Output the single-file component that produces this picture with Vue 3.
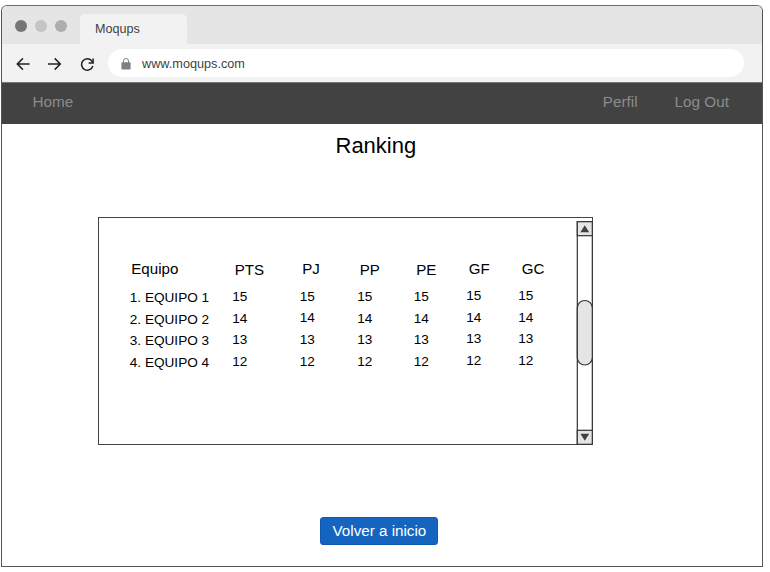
<script setup>
const columns = [
  { key: 'equipo', title: 'Equipo', values: ['1. EQUIPO 1', '2. EQUIPO 2', '3. EQUIPO 3', '4. EQUIPO 4'] },
  { key: 'pts', title: 'PTS', values: [15, 14, 13, 12] },
  { key: 'pj', title: 'PJ', values: [15, 14, 13, 12] },
  { key: 'pp', title: 'PP', values: [15, 14, 13, 12] },
  { key: 'pe', title: 'PE', values: [15, 14, 13, 12] },
  { key: 'gf', title: 'GF', values: [15, 14, 13, 12] },
  { key: 'gc', title: 'GC', values: [15, 14, 13, 12] }
]
</script>

<template>
  <div class="page">
    <div class="window">
      <header class="tabs">
        <div class="dots">
          <span class="dot dark"></span>
          <span class="dot light"></span>
          <span class="dot mid"></span>
        </div>
        <div class="tab">Moqups</div>
      </header>
      <div class="toolbar">
        <svg class="arrow" viewBox="0 0 14 14"><path d="M13.6 7H1.6M6.9 1.4L1.3 7l5.6 5.6" /></svg>
        <svg class="arrow" viewBox="0 0 14 14"><path d="M0 7h12.1M6.7 1.4L12.3 7l-5.6 5.6" /></svg>
        <svg class="arrow" viewBox="0 0 14 14">
          <path d="M12.8 9A5.7 5.7 0 1 1 11.6 3.7L13 5.4" />
          <path d="M13.1 1.6v4.3H8.6" />
        </svg>
        <div class="address">
          <svg class="lock" viewBox="0 0 10 12">
            <path class="shackle" d="M2.5 5V3a2.5 2.5 0 0 1 5 0v2" />
            <rect x="0.4" y="4.2" width="9.2" height="7.4" rx="0.8" />
          </svg>
          <span>www.moqups.com</span>
        </div>
      </div>
      <nav class="nav">
        <a>Home</a>
        <a class="profile">Perfil</a>
        <a>Log Out</a>
      </nav>
      <main class="content">
        <h1>Ranking</h1>
        <section class="panel">
          <div class="ranking">
            <div v-for="column in columns" :key="column.key" class="column" :class="column.key">
              <div class="title">{{ column.title }}</div>
              <div v-for="value in column.values" :key="value" class="cell">{{ value }}</div>
            </div>
          </div>
          <div class="scrollbar">
            <svg viewBox="0 0 17 224">
              <rect class="track" x="1.3" y="0.7" width="15" height="222.6" />
              <rect class="knob" x="1.3" y="0.7" width="15" height="14" />
              <rect class="knob" x="1.3" y="209.3" width="15" height="14" />
              <path class="mark" d="M4.4 11.2L8.8 4.2l4.4 7z" />
              <path class="mark" d="M4.4 212.8h8.8l-4.4 7z" />
              <rect class="knob" x="1.3" y="79.5" width="15" height="64.5" rx="7.5" />
            </svg>
          </div>
        </section>
        <button>Volver a inicio</button>
      </main>
    </div>
  </div>
</template>

<style>
body {
  margin: 0;
  background: #fff;
}
</style>

<style scoped>
.page {
  box-sizing: border-box;
  width: 770px;
  height: 572px;
  padding: 5px 0 0 1px;
  overflow: hidden;
  background: #fff;
  font-family: "Liberation Sans", Arial, sans-serif;
}

.window {
  box-sizing: border-box;
  width: 762px;
  height: 562px;
  border: 1px solid #555;
  border-top-color: #6a6a6a;
  border-radius: 6px 6px 0 0;
  overflow: hidden;
}

.tabs {
  display: flex;
  height: 38px;
  background: #e5e5e5;
}

.dots {
  display: flex;
  gap: 8px;
  width: 65px;
  padding: 14px 0 0 13px;
}

.dot {
  width: 12px;
  height: 12px;
  border-radius: 50%;
}

.dark { background: #757575; }
.light { background: #c4c4c4; }
.mid { background: #adadad; }

.tab {
  box-sizing: border-box;
  width: 107px;
  height: 30px;
  margin-top: 8px;
  padding-left: 15px;
  border-radius: 5px 5px 0 0;
  background: #f2f2f2;
  color: #424242;
  font-size: 12.6px;
  line-height: 30px;
}

.toolbar {
  box-sizing: border-box;
  display: flex;
  align-items: center;
  gap: 18px;
  height: 39px;
  padding: 0 18px 0 14px;
  border-bottom: 1px solid #777;
  background: #f2f2f2;
}

.arrow {
  flex: none;
  width: 14px;
  height: 14px;
  margin-top: 1px;
  fill: none;
  stroke: #222;
  stroke-width: 1.5;
}

.address {
  display: flex;
  flex: 1;
  align-items: center;
  height: 28px;
  margin-left: -4px;
  border-radius: 14px;
  background: #fff;
  color: #424242;
  font-size: 12.7px;
}

.address span {
  padding-top: 1px;
}

.lock {
  width: 10px;
  height: 12px;
  margin: 1px 11px 0 13px;
  fill: #808080;
}

.shackle {
  fill: none;
  stroke: #808080;
  stroke-width: 1;
}

.nav {
  display: flex;
  height: 41px;
  padding: 0 33px 0 30.5px;
  background: #424242;
  color: #8c8c8c;
  font-size: 15.3px;
  line-height: 37px;
}

.profile {
  margin: 0 37px 0 auto;
}

.content {
  display: flex;
  flex-direction: column;
}

h1 {
  margin: 9px 0 0 333.5px;
  color: #000;
  font-size: 22px;
  font-weight: 400;
  line-height: 26px;
}

.panel {
  box-sizing: border-box;
  display: flex;
  justify-content: space-between;
  width: 495px;
  height: 228px;
  margin: 58px 0 0 96px;
  border: 1px solid #444;
  color: #000;
}

.ranking {
  display: grid;
  grid-template-columns: 102.5px 67.5px 57.5px 56.5px 52.5px 52px 30px;
  padding: 41px 0 0 30.8px;
}

.column {
  white-space: nowrap;
}

.title {
  height: 27px;
  padding-left: 2.5px;
  font-size: 15.1px;
  line-height: 20px;
}

.cell {
  height: 21.67px;
  font-size: 13.6px;
  line-height: 21.67px;
}

.equipo .title { padding-left: 1.5px; }
.equipo .title { height: 28px; }
.pts, .pp, .pe { padding-top: 1px; }
.pts .title, .pp .title, .pe .title { height: 26px; }
.pj .title { height: 26.6px; }
.gf .title, .gc .title { height: 26px; }
.gc .title { padding-left: 3.4px; }

.scrollbar {
  flex: none;
  width: 17px;
  height: 224px;
  margin: 3px -1px 0 0;
}

.scrollbar svg {
  display: block;
  width: 17px;
  height: 224px;
}

.track,
.knob {
  fill: #fff;
  stroke: #333;
  stroke-width: 1.2;
}

.knob {
  fill: #e5e5e5;
}

.mark {
  fill: #424242;
}

button {
  width: 118px;
  height: 28px;
  margin: 72px 0 0 318.4px;
  padding: 0;
  border: 1px solid #1259b2;
  border-radius: 3px;
  background: #1565c0;
  color: #fff;
  font: 15.2px/26px "Liberation Sans", Arial, sans-serif;
}
</style>
